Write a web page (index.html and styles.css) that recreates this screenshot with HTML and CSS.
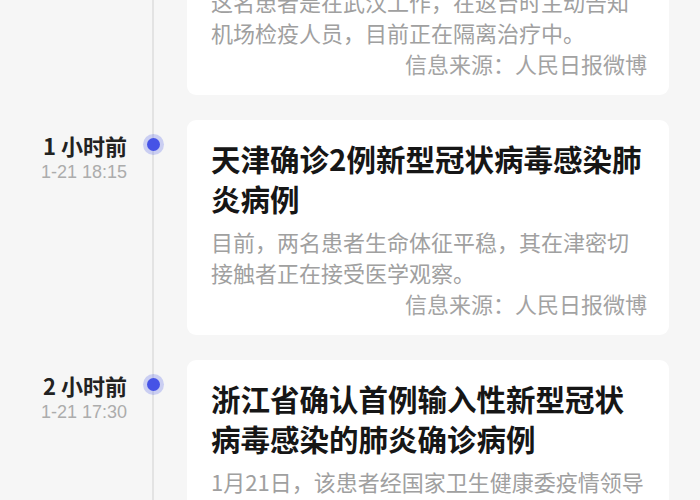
FILE: index.html
```html
<!DOCTYPE html>
<html lang="zh-CN">
<head>
<meta charset="utf-8">
<title>疫情动态</title>
<link rel="stylesheet" href="styles.css">
</head>
<body>
<main class="timeline">
  <section class="row">
    <div class="when">
      <div class="ago">30 分钟前</div>
      <div class="stamp">1-21 18:40</div>
    </div>
    <div class="axis"><span class="dot"></span></div>
    <article class="card">
      <h2 class="title">台湾确诊首例新型冠状病毒感染的肺炎病例</h2>
      <p class="desc">这名患者是在武汉工作，在返台时主动告知机场检疫人员，目前正在隔离治疗中。</p>
      <p class="source">信息来源：人民日报微博</p>
    </article>
  </section>
  <section class="row">
    <div class="when">
      <div class="ago">1 小时前</div>
      <div class="stamp">1-21 18:15</div>
    </div>
    <div class="axis"><span class="dot"></span></div>
    <article class="card">
      <h2 class="title">天津确诊2例新型冠状病毒感染肺炎病例</h2>
      <p class="desc">目前，两名患者生命体征平稳，其在津密切接触者正在接受医学观察。</p>
      <p class="source">信息来源：人民日报微博</p>
    </article>
  </section>
  <section class="row">
    <div class="when">
      <div class="ago">2 小时前</div>
      <div class="stamp">1-21 17:30</div>
    </div>
    <div class="axis"><span class="dot"></span></div>
    <article class="card">
      <h2 class="title">浙江省确认首例输入性新型冠状病毒感染的肺炎确诊病例</h2>
      <p class="desc">1月21日，该患者经国家卫生健康委疫情领导小组专家组评估，确认为新型冠状病毒感染的肺炎确诊病例。</p>
      <p class="source">信息来源：人民日报微博</p>
    </article>
  </section>
</main>
</body>
</html>
```

FILE: styles.css
```css
html, body {
  margin: 0;
  padding: 0;
  height: 100%;
  overflow: hidden;
  background: #f6f6f6;
}

body {
  font-family: "Noto Sans CJK SC", "Noto Sans", sans-serif;
  color: #1a1a1a;
}

.timeline {
  margin-top: -120px;
  padding-right: 31px;
  display: flex;
  flex-direction: column;
  gap: 25px;
  background: linear-gradient(#e3e3e3, #e3e3e3) no-repeat 152px 0 / 2px 100%;
  min-height: 800px;
}

.row {
  display: grid;
  grid-template-columns: 127px 60px 1fr;
  align-items: start;
}

.when {
  text-align: right;
  margin-top: 12px;
}

.ago {
  font-size: 22px;
  line-height: 26px;
  font-weight: 600;
  color: #222;
}

.stamp {
  font-family: "Liberation Sans", "Noto Sans", sans-serif;
  font-size: 18px;
  line-height: 28px;
  color: #acacac;
}

.axis {
  display: flex;
  justify-content: flex-start;
  padding-left: 20px;
  padding-top: 18px;
}

.dot {
  width: 13px;
  height: 13px;
  border-radius: 50%;
  background: #4653e6;
  box-shadow: 0 0 0 4px rgba(90, 105, 235, 0.28);
}

.card {
  background: #fff;
  border-radius: 9px;
  padding: 18px 22px 16px 24px;
}

.title {
  margin: 0;
  font-size: 29.5px;
  line-height: 40px;
  font-weight: 700;
  color: #161616;
}

.desc {
  margin: 8px 0 0;
  font-size: 22px;
  line-height: 31px;
  color: #a0a0a0;
}

.source {
  margin: 0;
  font-size: 22px;
  line-height: 31px;
  color: #a3a3a3;
  text-align: right;
}
```
